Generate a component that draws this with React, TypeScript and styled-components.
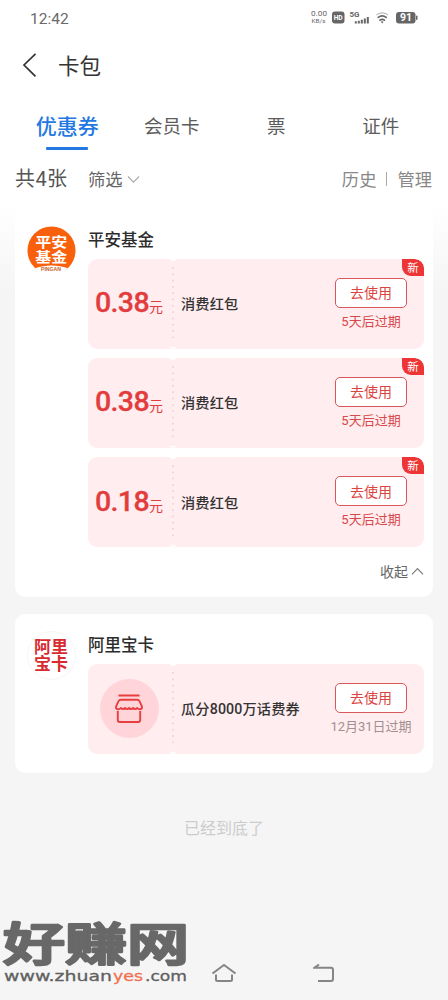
import React from "react";
import styled, { createGlobalStyle, css } from "styled-components";

const Global = createGlobalStyle`
  * { box-sizing: border-box; }
  body { margin: 0; background: #f5f5f5; }
`;

const Screen = styled.div`
  position: relative;
  width: 448px;
  height: 1000px;
  overflow: hidden;
  display: flex;
  flex-direction: column;
  background: linear-gradient(#fff 0, #fff 204px, #f5f5f5 290px);
  font-family: "Noto Sans CJK SC", "Noto Sans", sans-serif;
  color: #333;
`;

const StatusBar = styled.header`
  height: 36px;
  padding: 0 29px 0 30px;
  display: flex;
  align-items: center;
  justify-content: space-between;
  color: #6a6a6a;
`;

const Clock = styled.span`
  font: 15.5px/36px Roboto, sans-serif;
  padding-top: 1px;
`;

const StatusIcons = styled.div`
  display: flex;
  align-items: center;
`;

const NavBar = styled.div`
  height: 58px;
  padding-left: 21px;
  display: flex;
  align-items: center;
  gap: 20px;
`;

const Title = styled.h1`
  margin: 0;
  font-size: 21.5px;
  line-height: 58px;
  font-weight: 400;
`;

const Tabs = styled.nav`
  height: 60px;
  padding: 10px 15px 0;
  display: grid;
  grid-template-columns: repeat(4, 104.5px);
`;

const Tab = styled.div<{ $active?: boolean }>`
  display: flex;
  flex-direction: column;
  align-items: center;
  font-size: 18.5px;
  line-height: 43px;
  color: #5c5c5c;
  ${(p) =>
    p.$active &&
    css`
      font-size: 21px;
      font-weight: 500;
      color: #2378e2;
      &::after {
        content: "";
        width: 42px;
        height: 2.5px;
        border-radius: 1px;
        background: #2378e2;
      }
    `}
`;

const FilterBar = styled.div`
  height: 56px;
  padding: 0 16px 6px 15px;
  display: flex;
  align-items: center;
  font-size: 17.3px;
  line-height: 46px;
  color: #666;
`;

const Count = styled.span`
  width: 73px;
  font-family: Roboto, "Noto Sans CJK SC", sans-serif;
  font-size: 20px;
  letter-spacing: 0.4px;
  color: #555;
`;

const FilterLabel = styled.span`
  margin-right: 4px;
`;

const Links = styled.div`
  margin-left: auto;
  display: flex;
  align-items: center;
  color: #888;
`;

const Divider = styled.i`
  width: 1px;
  height: 14px;
  margin: 0 10px;
  background: #aaa;
`;

const Card = styled.section<{ $last?: boolean }>`
  margin: 0 15px 17px;
  height: ${(p) => (p.$last ? 159 : 387)}px;
  padding: ${(p) => (p.$last ? 16 : 15)}px 9px 0 12px;
  display: flex;
  gap: 12px;
  background: #fff;
  border-radius: 10px;
`;

const Logo = styled.div`
  flex: none;
  width: 49px;
  height: 49px;
  margin-top: 1px;
`;

const Content = styled.div`
  flex: 1;
  display: flex;
  flex-direction: column;
`;

const Brand = styled.h2`
  margin: 0 0 5px;
  font-size: 16.5px;
  line-height: 29px;
  font-weight: 500;
  color: #2c2c2c;
`;

const TicketBox = styled.div`
  position: relative;
  height: 89.5px;
  margin-bottom: 9.7px;
  display: grid;
  grid-template-columns: 85px 1fr 106px;
  background: #ffedef;
  border-radius: 9px;
  overflow: hidden;
`;

const Value = styled.div`
  display: flex;
  align-items: center;
  justify-content: center;
  border-radius: 9px;
`;

const Price = styled.div`
  display: flex;
  align-items: baseline;
  padding: 0 3px 1px 0;
  font-size: 14px;
  color: #e33c3d;
`;

const Amount = styled.b`
  font: 500 28.5px/34px Roboto, sans-serif;
  letter-spacing: -0.6px;
  -webkit-text-stroke: 0.3px #e33c3d;
`;

const StoreBadge = styled.div`
  width: 59px;
  height: 59px;
  margin-right: 3px;
  border-radius: 50%;
  background: #ffd5d9;
  display: flex;
  align-items: center;
  justify-content: center;
`;

const Name = styled.div`
  position: relative;
  display: flex;
  align-items: center;
  padding: 0 0 1px 8px;
  font-family: "Liberation Sans", "Noto Sans CJK SC", sans-serif;
  font-family: Roboto, "Noto Sans CJK SC", sans-serif;
  font-size: 14.2px;
  letter-spacing: 0.15px;
  font-weight: 500;
  color: #333;
  white-space: nowrap;
`;

const Seam = styled.svg`
  position: absolute;
  left: -5px;
  top: 0;
`;

const Action = styled.div`
  display: flex;
  flex-direction: column;
  align-items: center;
  padding-top: 19px;
`;

const UseButton = styled.button`
  width: 72px;
  height: 30px;
  padding: 0 0 1.5px;
  border: 1.5px solid #d9575a;
  border-radius: 5px;
  background: #fff;
  font: 14px/24px "Noto Sans CJK SC", sans-serif;
  color: #dc4442;
`;

const Expiry = styled.span<{ $muted?: boolean }>`
  font-family: Roboto, "Noto Sans CJK SC", sans-serif;
  font-size: 13px;
  line-height: 28px;
  white-space: nowrap;
  color: ${(p) => (p.$muted ? "#a18f92" : "#d9484b")};
`;

const NewTag = styled.span`
  position: absolute;
  top: 0;
  right: 0;
  width: 22px;
  height: 17px;
  border-radius: 0 9px 0 9px;
  background: #ee3536;
  color: #fff;
  font-size: 11.5px;
  line-height: 16.5px;
  text-align: center;
`;

const Collapse = styled.div`
  display: flex;
  align-items: center;
  justify-content: flex-end;
  gap: 3px;
  font-size: 14px;
  line-height: 29px;
  color: #666;
`;

const EndNote = styled.div`
  margin-top: 22px;
  text-align: center;
  font-size: 16px;
  line-height: 30px;
  color: #ccc;
`;

const SystemNav = styled.footer`
  margin-top: auto;
  height: 55px;
  padding: 0 113px 0 211px;
  display: flex;
  align-items: center;
  justify-content: space-between;
`;

const Watermark = styled.svg`
  position: absolute;
  left: 0;
  bottom: 0;
`;

function StatusGlyphs() {
  return (
    <svg width="110" height="20" viewBox="0 0 110 20" fill="#666" fontFamily="Roboto">
      <text x="2" y="8.2" fontSize="7.5" textLength="16" lengthAdjust="spacingAndGlyphs">0.00</text>
      <text x="2.5" y="15.2" fontSize="6" textLength="14" lengthAdjust="spacingAndGlyphs">KB/s</text>
      <rect x="23" y="3.5" width="12.5" height="12" rx="3" />
      <text x="24.7" y="12.4" fontSize="8" fontWeight="700" fill="#fff" textLength="9" lengthAdjust="spacingAndGlyphs">HD</text>
      <text x="40.5" y="9" fontSize="7.5" fontWeight="700" textLength="10" lengthAdjust="spacingAndGlyphs">5G</text>
      <path d="M45.8 13.2h2v2.3h-2zM48.800 12.7h2v2.8h-2zM51.8 11.700h2v3.8h-2zM54.8 10.5h2v5h-2zM57.8 9h2v6.5h-2z" />
      <g fill="none" stroke="#666" strokeLinecap="round">
        <path d="M67.7 6.7q5.5-4 11 0" strokeWidth="1" stroke="#aaa" />
        <path d="M69.2 9.4q4-3 8 0" strokeWidth="1.7" />
        <path d="M70.9 12.2q2.3-1.7 4.6 0" strokeWidth="1.6" />
      </g>
      <path d="M71.8 13.7q1.4-1 2.8 0l-1.4 1.8z" />
      <rect x="87" y="4" width="19.5" height="11.5" rx="3" />
      <rect x="107" y="7.5" width="1.5" height="4.5" rx=".7" />
      <text x="91" y="13.3" fontSize="10" fontWeight="700" fill="#fff" textLength="12" lengthAdjust="spacingAndGlyphs">91</text>
    </svg>
  );
}

function Chevron({ up, color = "#999" }: { up?: boolean; color?: string }) {
  return (
    <svg width="13" height="9" viewBox="0 0 13 9" fill="none" stroke={color} strokeWidth="1.1">
      <path d={up ? "M1 7.3 6.5 1.5 12 7.3" : "M1 1.5 6.5 7.2 12 1.5"} />
    </svg>
  );
}

function StoreIcon() {
  return (
    <svg width="30" height="30" viewBox="0 0 30 30" fill="none" stroke="#e93e3f" strokeWidth="1.9" strokeLinejoin="round">
      <path d="M4.5 1.5h21" />
      <path d="M7 5.700H23q1.800 0 2.600 1.700l2.200 4.800q1 2.700-1.700 3.100-1.700.2-2.900-1.300-2 2.200-4 0-2 2.200-4.100 0-2.100 2.200-4.100 0-2 2.200-4.100 0-1.200 1.500-3 1.300-2.700-.4-1.700-3.100L4.400 7.400Q5.200 5.700 7 5.700Z" />
      <path d="M3.8 17v9q0 2 2 2h18.400q2 0 2-2v-9" />
    </svg>
  );
}

function PinganLogo() {
  return (
    <svg width="49" height="49" viewBox="0 0 49 49" fontFamily="Noto Sans CJK SC">
      <defs>
        <clipPath id="disc"><circle cx="24.5" cy="24.5" r="24" /></clipPath>
      </defs>
      <g clipPath="url(#disc)">
        <rect width="49" height="44" fill="#f8600c" />
        <ellipse cx="24.5" cy="48" rx="22" ry="8.5" fill="#fff" />
      </g>
      <g fill="#fff" fontWeight="700" fontSize="14">
        <text x="8.3" y="21.3" textLength="32" lengthAdjust="spacingAndGlyphs">平安</text>
        <text x="8.3" y="35.5" textLength="32" lengthAdjust="spacingAndGlyphs">基金</text>
      </g>
      <text x="14" y="44.500" fontFamily="Liberation Sans" fontWeight="700" fontSize="4.5" fill="#c4622d" textLength="20" lengthAdjust="spacingAndGlyphs">PINGAN</text>
    </svg>
  );
}

function AliLogo() {
  return (
    <svg width="49" height="49" viewBox="0 0 49 49">
      <circle cx="24.5" cy="24.5" r="24" fill="#fff" stroke="#f5f5f5" />
      <g fill="#d82b30" fontFamily="Noto Sans CJK SC" fontWeight="700" fontSize="16.5">
        <text x="7" y="22.2" textLength="34" lengthAdjust="spacingAndGlyphs">阿里</text>
        <text x="7" y="39.4" textLength="34" lengthAdjust="spacingAndGlyphs">宝卡</text>
      </g>
    </svg>
  );
}

type TicketProps = { amount?: string; name: string; expiry: string; fresh?: boolean };

function Ticket({ amount, name, expiry, fresh }: TicketProps) {
  return (
    <TicketBox>
      <Value>
        {amount ? (
          <Price><Amount>{amount}</Amount>元</Price>
        ) : (
          <StoreBadge><StoreIcon /></StoreBadge>
        )}
      </Value>
      <Name>
        <Seam width="10" height="90" viewBox="0 0 10 90">
          <path d="M1.5 0q3.5 4 7 0zM1.5 89.5q3.5-4 7 0z" fill="#fff" />
          <path d="M5 9v74" stroke="#ecced3" strokeWidth="1.8" strokeLinecap="round" strokeDasharray="0 6.3" />
        </Seam>
        {name}
      </Name>
      <Action>
        <UseButton>去使用</UseButton>
        <Expiry $muted={!fresh}>{expiry}</Expiry>
      </Action>
      {fresh && <NewTag>新</NewTag>}
    </TicketBox>
  );
}

export default function App() {
  return (
    <Screen>
      <Global />
      <StatusBar>
        <Clock>12:42</Clock>
        <StatusIcons><StatusGlyphs /></StatusIcons>
      </StatusBar>
      <NavBar>
        <svg width="17" height="26" viewBox="0 0 17 26" fill="none" stroke="#333" strokeWidth="1.7">
          <path d="M14.5 1.8 3 13l11.5 11.3" />
        </svg>
        <Title>卡包</Title>
      </NavBar>
      <Tabs>
        <Tab $active>优惠券</Tab>
        <Tab>会员卡</Tab>
        <Tab>票</Tab>
        <Tab>证件</Tab>
      </Tabs>
      <FilterBar>
        <Count>共4张</Count>
        <FilterLabel>筛选</FilterLabel>
        <Chevron color="#aaa" />
        <Links>历史<Divider />管理</Links>
      </FilterBar>
      <Card>
        <Logo><PinganLogo /></Logo>
        <Content>
          <Brand>平安基金</Brand>
          <Ticket amount="0.38" name="消费红包" expiry="5天后过期" fresh />
          <Ticket amount="0.38" name="消费红包" expiry="5天后过期" fresh />
          <Ticket amount="0.18" name="消费红包" expiry="5天后过期" fresh />
          <Collapse>收起 <Chevron up color="#777" /></Collapse>
        </Content>
      </Card>
      <Card $last>
        <Logo><AliLogo /></Logo>
        <Content>
          <Brand>阿里宝卡</Brand>
          <Ticket name="瓜分8000万话费券" expiry="12月31日过期" />
        </Content>
      </Card>
      <EndNote>已经到底了</EndNote>
      <SystemNav>
        <svg width="26" height="20" viewBox="0 0 26 20" fill="none" stroke="#858585" strokeWidth="2">
          <path d="M1.5 10.5 13 2l11.5 8.5M5 11.5v5q0 1.5 1.5 1.5h13q1.5 0 1.5-1.5v-5" />
        </svg>
        <svg width="22" height="20" viewBox="0 0 22 20" fill="none" stroke="#858585" strokeWidth="2">
          <path d="M6 1.5 1.5 4.7H18q2 0 2 2V16q0 2-2 2H5" />
        </svg>
      </SystemNav>
      <Watermark width="200" height="110" viewBox="0 -20 200 110">
        <text x="3" y="50.5" fontFamily="Noto Sans CJK SC" fontWeight="500" fontSize="45" fill="#686868" stroke="#686868" strokeWidth="2.6" strokeLinejoin="round" textLength="186" lengthAdjust="spacingAndGlyphs">好赚网</text>
        <g fontFamily="DejaVu Sans" fontSize="14.5" fill="#606060" stroke="#606060" strokeWidth=".3">
          <text x="4" y="71" textLength="108" lengthAdjust="spacingAndGlyphs">www.zhuan</text>
          <text x="113" y="71" fill="#f07052" stroke="#f07052" textLength="30" lengthAdjust="spacingAndGlyphs">yes</text>
          <text x="145" y="71" textLength="42" lengthAdjust="spacingAndGlyphs">.com</text>
        </g>
      </Watermark>
    </Screen>
  );
}
